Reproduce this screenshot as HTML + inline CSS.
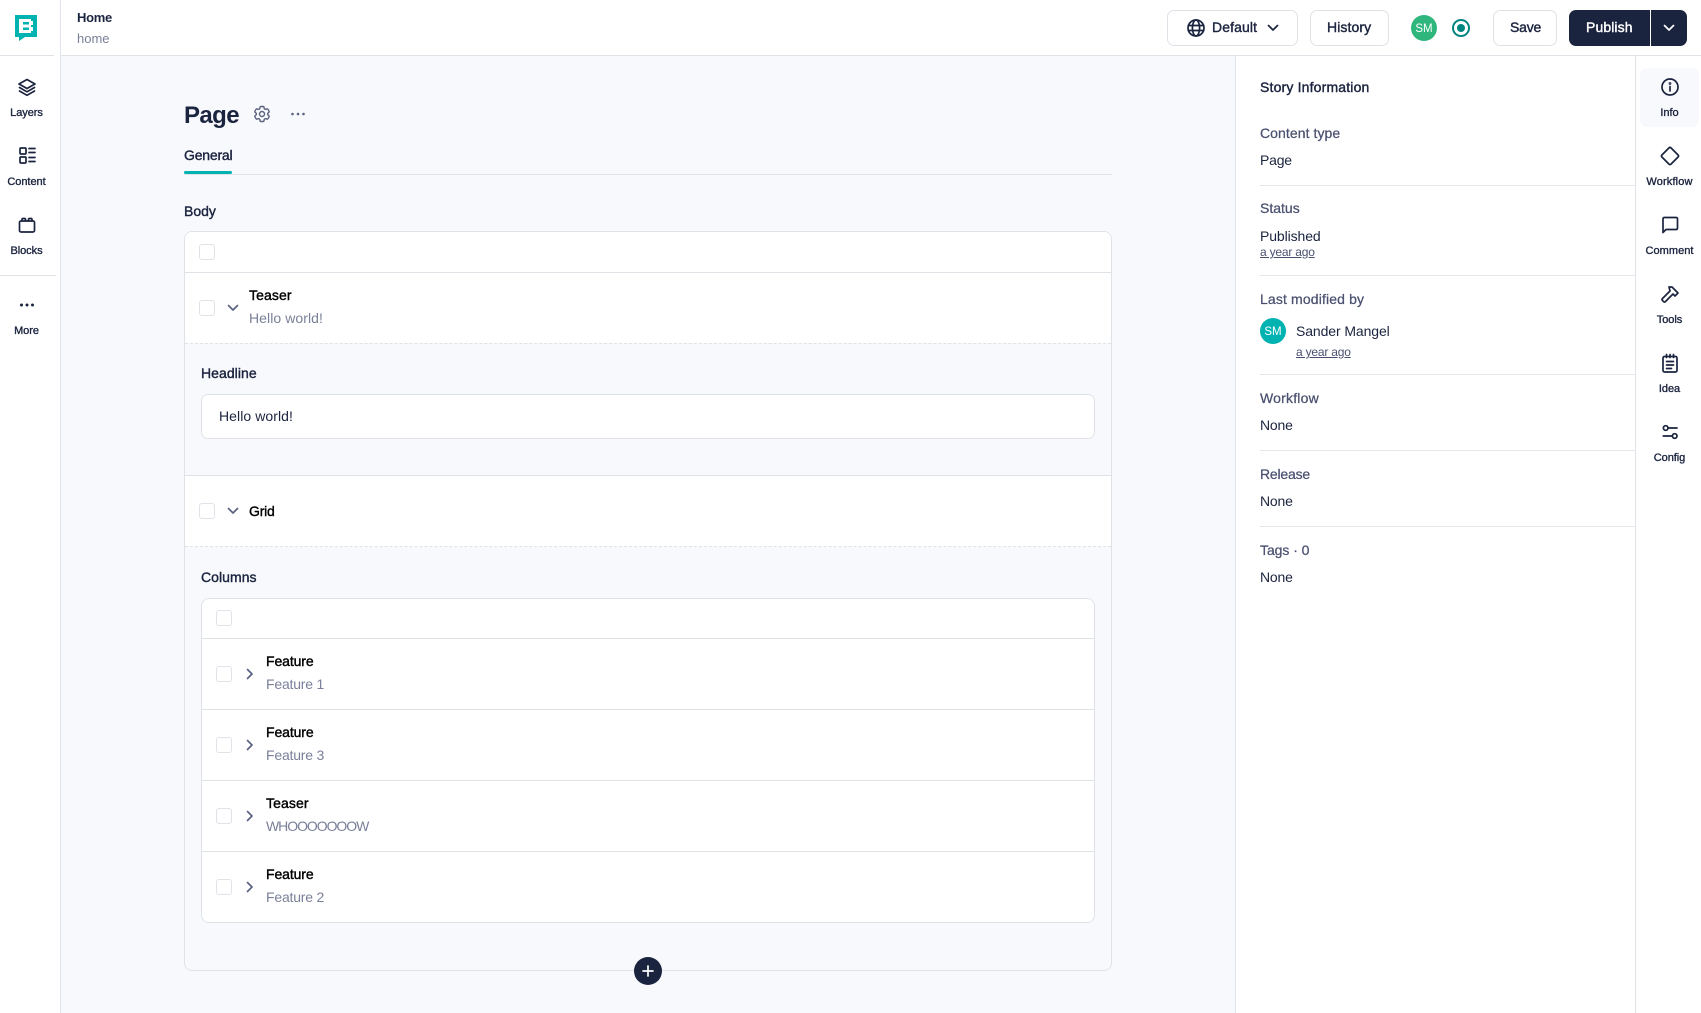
<!DOCTYPE html>
<html lang="en"><head><meta charset="utf-8"><title>Home</title>
<style>
html,body{margin:0;padding:0;width:1701px;height:1013px;overflow:hidden;background:#fff}
body{position:relative;font-family:"Liberation Sans",Arial,sans-serif;color:#1b243f;font-size:14px}
.a{position:absolute;box-sizing:border-box}
.t{position:absolute;white-space:nowrap;line-height:20px;height:20px;letter-spacing:-.2px}
.m{-webkit-text-stroke:.4px currentColor}
.l{font-size:11px;letter-spacing:-.05px;width:70px;text-align:center;-webkit-text-stroke:.35px currentColor}
.g{color:#4a5170}
.s{color:#7b8099}
.k{color:#000}
.cb{position:absolute;width:16px;height:16px;border:1px solid #dfe3e8;border-radius:3px;background:#fff;box-sizing:border-box}
.hr{position:absolute;height:1px;background:#e4e7ec}
.btn{position:absolute;box-sizing:border-box;top:10px;height:36px;border:1px solid #dfe3e8;border-radius:7px;background:#fff}
svg{position:absolute;overflow:visible;fill:none;stroke:#1b243f;stroke-width:1.7;stroke-linecap:round;stroke-linejoin:round}
.ya{font-size:12px;letter-spacing:-.2px;color:#4a5170;text-decoration:underline}
.gm{-webkit-text-stroke-width:.25px}
</style></head><body>

<!-- backgrounds -->
<div class="a" style="left:61px;top:56px;width:1175px;height:957px;background:#f8f9fc"></div>
<div class="a" style="left:60px;top:0;width:1px;height:1013px;background:#dfe3ee"></div>
<div class="a" style="left:61px;top:55px;width:1640px;height:1px;background:#dfe3e8"></div>
<div class="a" style="left:1235px;top:56px;width:1px;height:957px;background:#dfe3ee"></div>
<div class="a" style="left:1635px;top:56px;width:1px;height:957px;background:#dfe3e8"></div>
<div class="a" style="left:0;top:55px;width:54px;height:1px;background:#dfe3e8"></div>
<div class="a" style="left:0;top:275px;width:56px;height:1px;background:#dfe3e8"></div>

<!-- logo -->
<svg style="left:15px;top:15px;stroke:none" width="22" height="26" viewBox="0 0 22 26">
<path fill="#00b3b0" fill-rule="evenodd" d="M0 0H22V22H10L4 26V22H0Z M4 4V18H16V16H18V12H16V10H18V6H16V4Z M8 7H14V9.500H8Z M8 12.500H14V15H8Z"/>
</svg>

<!-- left rail -->
<svg style="left:17px;top:77px" width="20" height="20" viewBox="0 0 20 20"><path d="M10 2.500 18 7l-8 4.500L2 7z"/><path d="M2.500 10.500 10 14.800l7.500-4.300"/><path d="M2.500 14 10 18.300 17.500 14"/></svg>
<div class="t l" style="left:-8.500px;top:103px">Layers</div>
<svg style="left:17px;top:145px" width="20" height="20" viewBox="0 0 20 20"><rect x="3" y="3" width="6" height="6" rx="1"/><rect x="3" y="12" width="6" height="6" rx="1"/><path d="M12 3.500h6M12 7.500h6M12 12.500h6M12 16.500h6"/></svg>
<div class="t l" style="left:-8.500px;top:172px">Content</div>
<svg style="left:17px;top:215px" width="20" height="20" viewBox="0 0 20 20"><rect x="2.500" y="6" width="15" height="11" rx="1.500"/><path d="M5 6V4.500Q5 3.500 6 3.500H7.500Q8.500 3.500 8.500 4.500V6M11.500 6V4.500Q11.500 3.500 12.500 3.500H14Q15 3.500 15 4.500V6"/></svg>
<div class="t l" style="left:-8.500px;top:241px">Blocks</div>
<svg style="left:17px;top:295px;stroke:none;fill:#1b243f" width="20" height="20" viewBox="0 0 20 20"><circle cx="4.500" cy="10" r="1.500"/><circle cx="10" cy="10" r="1.500"/><circle cx="15.500" cy="10" r="1.500"/></svg>
<div class="t l" style="left:-8.500px;top:321px">More</div>

<!-- header -->
<div class="t" style="left:77px;top:8px;font-size:13px;font-weight:700;letter-spacing:-.3px">Home</div>
<div class="t s" style="left:77px;top:29px;font-size:13px;letter-spacing:0">home</div>

<div class="btn" style="left:1167px;width:131px"></div>
<svg style="left:1187px;top:19px" width="18" height="18" viewBox="0 0 18 18" stroke-width="1.400"><circle cx="9" cy="9" r="8"/><ellipse cx="9" cy="9" rx="3.600" ry="8"/><path d="M1.300 6.500h15.400M1.300 11.500h15.400"/></svg>
<div class="t m" style="left:1212px;top:17px;letter-spacing:.1px">Default</div>
<svg style="left:1267px;top:24px" width="12" height="8" viewBox="0 0 12 8"><path d="M1.500 1.500 6 6l4.500-4.500"/></svg>
<div class="btn" style="left:1310px;width:79px"></div>
<div class="t m" style="left:1327px;top:17px;letter-spacing:.1px">History</div>
<div class="a" style="left:1411px;top:15px;width:26px;height:26px;border-radius:50%;background:#2eb67d;color:#fff;font-size:11.500px;line-height:28px;text-align:center">SM</div>
<div class="a" style="left:1452px;top:19px;width:18px;height:18px;border-radius:50%;border:2px solid #00857f;background:#fff"></div>
<div class="a" style="left:1457px;top:24px;width:8px;height:8px;border-radius:50%;background:#00857f"></div>
<div class="btn" style="left:1493px;width:64px"></div>
<div class="t m" style="left:1510px;top:17px">Save</div>
<div class="a" style="left:1569px;top:10px;width:81px;height:36px;border-radius:7px 0 0 7px;background:#1b243f"></div>
<div class="a" style="left:1651px;top:10px;width:36px;height:36px;border-radius:0 7px 7px 0;background:#1b243f"></div>
<div class="t m" style="left:1586px;top:17px;color:#fff;letter-spacing:.1px">Publish</div>
<svg style="left:1663px;top:24px;stroke:#fff" width="12" height="8" viewBox="0 0 12 8"><path d="M1.500 1.500 6 6l4.500-4.500"/></svg>

<!-- page title -->
<div class="a" style="left:184px;top:101px;font-size:24px;font-weight:700;line-height:30px;letter-spacing:-.6px">Page</div>
<svg style="left:252px;top:104px;stroke:#5b6180" width="20" height="20" viewBox="0 0 24 24" stroke-width="1.500"><path d="M9.594 3.940c.09-.542.56-.94 1.110-.94h2.593c.55 0 1.020.398 1.110.94l.213 1.281c.063.374.313.686.645.870.074.040.147.083.220.127.325.196.720.257 1.075.124l1.217-.456a1.125 1.125 0 0 1 1.370.490l1.296 2.247a1.125 1.125 0 0 1-.260 1.431l-1.003.827c-.293.241-.438.613-.430.992a7.723 7.723 0 0 1 0 .255c-.008.378.137.750.430.991l1.004.827c.424.350.534.955.260 1.430l-1.298 2.247a1.125 1.125 0 0 1-1.369.491l-1.217-.456c-.355-.133-.750-.072-1.076.124a6.470 6.470 0 0 1-.220.128c-.331.183-.581.495-.644.869l-.213 1.281c-.090.543-.560.940-1.110.940h-2.594c-.550 0-1.019-.398-1.110-.940l-.213-1.281c-.062-.374-.312-.686-.644-.870a6.520 6.520 0 0 1-.220-.127c-.325-.196-.720-.257-1.076-.124l-1.217.456a1.125 1.125 0 0 1-1.369-.490l-1.297-2.247a1.125 1.125 0 0 1 .260-1.431l1.004-.827c.292-.240.437-.613.430-.991a6.932 6.932 0 0 1 0-.255c.007-.380-.138-.751-.430-.992l-1.004-.827a1.125 1.125 0 0 1-.260-1.430l1.297-2.247a1.125 1.125 0 0 1 1.370-.491l1.216.456c.356.133.751.072 1.076-.124.072-.044.146-.086.220-.128.332-.183.582-.495.644-.869l.214-1.280Z"/><circle cx="12" cy="12" r="3"/></svg>
<svg style="left:290px;top:106px;stroke:none;fill:#5b6180" width="16" height="16" viewBox="0 0 16 16"><circle cx="2.500" cy="8" r="1.300"/><circle cx="8" cy="8" r="1.300"/><circle cx="13.500" cy="8" r="1.300"/></svg>

<div class="t m" style="left:184px;top:145px">General</div>
<div class="hr" style="left:184px;top:174px;width:928px;background:#dfe3e8"></div>
<div class="a" style="left:184px;top:171px;width:48px;height:3px;border-radius:2px;background:#00b3b0"></div>
<div class="t m" style="left:184px;top:201px;letter-spacing:0">Body</div>

<!-- outer box -->
<div class="a" style="left:184px;top:231px;width:928px;height:740px;border:1px solid #dfe3e8;border-radius:8px;background:#f8f9fc"></div>
<div class="a" style="left:185px;top:232px;width:926px;height:111px;background:#fff;border-radius:7px 7px 0 0"></div>
<div class="hr" style="left:185px;top:272px;width:926px;background:#dfe3e8"></div>
<div class="a" style="left:185px;top:343px;width:926px;height:0;border-top:1px dashed #dfe3e8"></div>
<div class="cb" style="left:199px;top:244px"></div>
<div class="cb" style="left:199px;top:300px"></div>
<svg style="left:228px;top:305px;stroke:#5b6180" width="10" height="6" viewBox="0 0 10 6"><path d="M.5.500 5 5 9.500.500"/></svg>
<div class="t m k" style="left:249px;top:285px;letter-spacing:.1px">Teaser</div>
<div class="t s" style="left:249px;top:308px;letter-spacing:.07px">Hello world!</div>

<div class="t m" style="left:201px;top:363px;letter-spacing:.05px">Headline</div>
<div class="a" style="left:201px;top:394px;width:894px;height:45px;border:1px solid #dfe3e8;border-radius:7px;background:#fff"></div>
<div class="t" style="left:219px;top:406px;letter-spacing:.07px">Hello world!</div>

<div class="a" style="left:185px;top:475px;width:926px;height:72px;background:#fff;border-top:1px solid #dfe3e8;border-bottom:1px dashed #dfe3e8"></div>
<div class="cb" style="left:199px;top:503px"></div>
<svg style="left:228px;top:508px;stroke:#5b6180" width="10" height="6" viewBox="0 0 10 6"><path d="M.5.500 5 5 9.500.500"/></svg>
<div class="t m k" style="left:249px;top:501px">Grid</div>

<div class="t m" style="left:201px;top:567px;letter-spacing:.05px">Columns</div>

<!-- inner box -->
<div class="a" style="left:201px;top:598px;width:894px;height:325px;border:1px solid #dfe3e8;border-radius:8px;background:#fff"></div>
<div class="hr" style="left:202px;top:638px;width:892px;background:#dfe3e8"></div>
<div class="hr" style="left:202px;top:709px;width:892px;background:#dfe3e8"></div>
<div class="hr" style="left:202px;top:780px;width:892px;background:#dfe3e8"></div>
<div class="hr" style="left:202px;top:851px;width:892px;background:#dfe3e8"></div>
<div class="cb" style="left:216px;top:610px"></div>

<div class="cb" style="left:216px;top:666px"></div>
<svg style="left:247px;top:669px;stroke:#5b6180" width="6" height="10" viewBox="0 0 6 10"><path d="M.5.500 5 5 .5 9.500"/></svg>
<div class="t m k" style="left:266px;top:651px;letter-spacing:-.1px">Feature</div>
<div class="t s" style="left:266px;top:674px">Feature 1</div>

<div class="cb" style="left:216px;top:737px"></div>
<svg style="left:247px;top:740px;stroke:#5b6180" width="6" height="10" viewBox="0 0 6 10"><path d="M.5.500 5 5 .5 9.500"/></svg>
<div class="t m k" style="left:266px;top:722px;letter-spacing:-.1px">Feature</div>
<div class="t s" style="left:266px;top:745px">Feature 3</div>

<div class="cb" style="left:216px;top:808px"></div>
<svg style="left:247px;top:811px;stroke:#5b6180" width="6" height="10" viewBox="0 0 6 10"><path d="M.5.500 5 5 .5 9.500"/></svg>
<div class="t m k" style="left:266px;top:793px;letter-spacing:.1px">Teaser</div>
<div class="t s" style="left:266px;top:816px;letter-spacing:-1.05px">WHOOOOOOOW</div>

<div class="cb" style="left:216px;top:879px"></div>
<svg style="left:247px;top:882px;stroke:#5b6180" width="6" height="10" viewBox="0 0 6 10"><path d="M.5.500 5 5 .5 9.500"/></svg>
<div class="t m k" style="left:266px;top:864px;letter-spacing:-.1px">Feature</div>
<div class="t s" style="left:266px;top:887px">Feature 2</div>

<!-- add button -->
<div class="a" style="left:634px;top:957px;width:28px;height:28px;border-radius:50%;background:#1b243f"></div>
<svg style="left:642px;top:965px;stroke:#fff" width="12" height="12" viewBox="0 0 12 12" stroke-width="1.500"><path d="M6 1v10M1 6h10"/></svg>

<!-- info panel -->
<div class="t m" style="left:1260px;top:77px;letter-spacing:.17px">Story Information</div>
<div class="t g m gm" style="left:1260px;top:123px;letter-spacing:.07px">Content type</div>
<div class="t" style="left:1260px;top:150px">Page</div>
<div class="hr" style="left:1260px;top:185px;width:375px"></div>
<div class="t g m gm" style="left:1260px;top:198px;letter-spacing:0">Status</div>
<div class="t" style="left:1260px;top:226px;letter-spacing:-.1px">Published</div>
<div class="t ya" style="left:1260px;top:242px">a year ago</div>
<div class="hr" style="left:1260px;top:275px;width:375px"></div>
<div class="t g m gm" style="left:1260px;top:289px;letter-spacing:.14px">Last modified by</div>
<div class="a" style="left:1260px;top:318px;width:26px;height:26px;border-radius:50%;background:#00b3b0;color:#fff;font-size:11.500px;line-height:28px;text-align:center">SM</div>
<div class="t" style="left:1296px;top:321px;letter-spacing:-.1px">Sander Mangel</div>
<div class="t ya" style="left:1296px;top:342px">a year ago</div>
<div class="hr" style="left:1260px;top:374px;width:375px"></div>
<div class="t g m gm" style="left:1260px;top:388px;letter-spacing:.2px">Workflow</div>
<div class="t" style="left:1260px;top:415px">None</div>
<div class="hr" style="left:1260px;top:450px;width:375px"></div>
<div class="t g m gm" style="left:1260px;top:464px">Release</div>
<div class="t" style="left:1260px;top:491px">None</div>
<div class="hr" style="left:1260px;top:526px;width:375px"></div>
<div class="t g m gm" style="left:1260px;top:540px;letter-spacing:-.05px">Tags · 0</div>
<div class="t" style="left:1260px;top:567px">None</div>

<!-- right rail -->
<div class="a" style="left:1640px;top:68px;width:59px;height:59px;border-radius:7px;background:#f8f9fc"></div>
<svg style="left:1660px;top:77px" width="20" height="20" viewBox="0 0 20 20"><circle cx="10" cy="10" r="8"/><path d="M10 9.500v4.500"/><circle cx="10" cy="6.500" r=".5"/></svg>
<div class="t l" style="left:1634.500px;top:103px">Info</div>
<svg style="left:1660px;top:146px" width="20" height="20" viewBox="0 0 20 20"><path d="M9 1.900Q10 1 11 1.900L18.100 9Q19 10 18.100 11L11 18.100Q10 19 9 18.100L1.900 11Q1 10 1.900 9Z"/></svg>
<div class="t l" style="left:1634.500px;top:172px;letter-spacing:.15px">Workflow</div>
<svg style="left:1660px;top:215px" width="20" height="20" viewBox="0 0 20 20"><path d="M3 17.500V4Q3 2.500 4.500 2.500H16Q17.500 2.500 17.500 4V13Q17.500 14.500 16 14.500H6Z"/></svg>
<div class="t l" style="left:1634.500px;top:241px;letter-spacing:.05px">Comment</div>
<svg style="left:1660px;top:284px" width="20" height="20" viewBox="0 0 20 20"><path d="M9 3H12L18 9L15 12L13 10L5.500 17.500Q4.500 18.500 3.500 17.500L2.500 16.500Q1.500 15.500 2.500 14.500L10 7Z"/></svg>
<div class="t l" style="left:1634.500px;top:310px">Tools</div>
<svg style="left:1660px;top:353px" width="20" height="20" viewBox="0 0 20 20"><rect x="3" y="3.500" width="14" height="15.500" rx="1.500"/><path d="M6.500 1.500v3M10 1.500v3M13.500 1.500v3M6.500 8.500h7M6.500 12h7M6.500 15.500h5"/></svg>
<div class="t l" style="left:1634.500px;top:379px">Idea</div>
<svg style="left:1660px;top:422px" width="20" height="20" viewBox="0 0 20 20"><circle cx="5.700" cy="6" r="2.300"/><path d="M8 6h9M3.300 14h9"/><circle cx="14.700" cy="14" r="2.300"/></svg>
<div class="t l" style="left:1634.500px;top:448px">Config</div>

</body></html>
